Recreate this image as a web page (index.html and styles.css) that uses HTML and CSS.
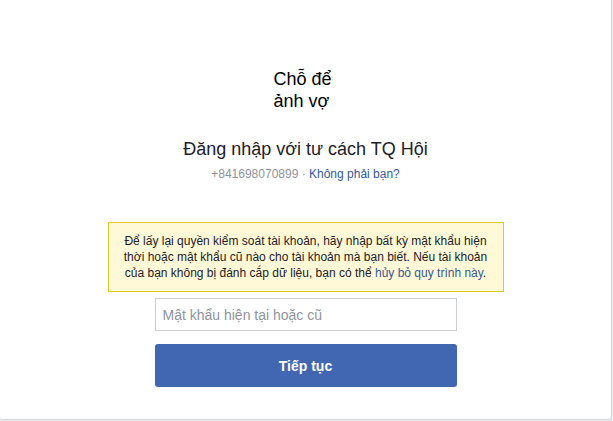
FILE: index.html
```
<!DOCTYPE html>
<html lang="vi">
  <head>
    <meta charset="UTF-8" />
    <meta name="viewport" content="width=device-width, initial-scale=1.0" />
    <title>Đăng nhập</title>
    <link rel="stylesheet" href="styles.css">
  </head>
  <body>
    <main class="kort">
      <div class="anh">Chỗ để<br />ảnh vợ</div>
      <h2 class="tieude">Đăng nhập với tư cách TQ Hội</h2>
      <p class="phu">+841698070899 · <a href="#">Không phải bạn?</a></p>
      <div class="canhbao">
        Để lấy lại quyền kiểm soát tài khoản, hãy nhập bất kỳ mật khẩu hiện
        thời hoặc mật khẩu cũ nào cho tài khoản mà bạn biết. Nếu tài khoản
        của bạn không bị đánh cắp dữ liệu, bạn có thể <a href="#">hủy bỏ quy trình này</a>.
      </div>
      <form class="bieumau">
        <input type="password" placeholder="Mật khẩu hiện tại hoặc cũ" />
        <button type="button">Tiếp tục</button>
      </form>
    </main>
  </body>
</html>
```

FILE: styles.css
```
* {
  box-sizing: border-box;
  margin: 0;
  padding: 0;
}

body {
  background: #e9ebee;
  font-family: "Liberation Sans", Arial, sans-serif;
  color: #1d2129;
}

a {
  color: #365899;
  text-decoration: none;
}

.kort {
  width: 612px;
  height: 420px;
  background: #fff;
  border-right: 1px solid #d3d5d9;
  border-bottom: 1px solid #d3d5d9;
  border-radius: 0 0 3px 3px;
  display: flex;
  flex-direction: column;
  align-items: center;
  padding-top: 68px;
}

.anh {
  font-size: 18px;
  line-height: 22px;
  color: #000;
  width: 80px;
  text-align: left;
  padding-left: 8px;
}

.tieude {
  font-size: 18px;
  font-weight: normal;
  line-height: 22px;
  margin-top: 26px;
}

.phu {
  font-size: 12px;
  line-height: 16px;
  color: #90949c;
  margin-top: 6px;
}

.canhbao {
  width: 396px;
  margin-top: 40px;
  padding: 10px 12px;
  background: #fff9d7;
  border: 1px solid #e2c822;
  font-size: 12px;
  line-height: 16px;
  text-align: center;
  color: #1d2129;
}

.bieumau {
  width: 302px;
  display: flex;
  flex-direction: column;
  gap: 13px;
  margin-top: 6px;
}

.bieumau input {
  height: 33px;
  border: 1px solid #ccd0d5;
  padding: 0 7px;
  font-family: inherit;
  font-size: 14px;
  color: #1d2129;
}

.bieumau input::placeholder {
  color: #90949c;
}

.bieumau button {
  height: 43px;
  border: none;
  border-radius: 3px;
  background: #4267b2;
  color: #fff;
  font-family: inherit;
  font-size: 14px;
  font-weight: bold;
}
```
